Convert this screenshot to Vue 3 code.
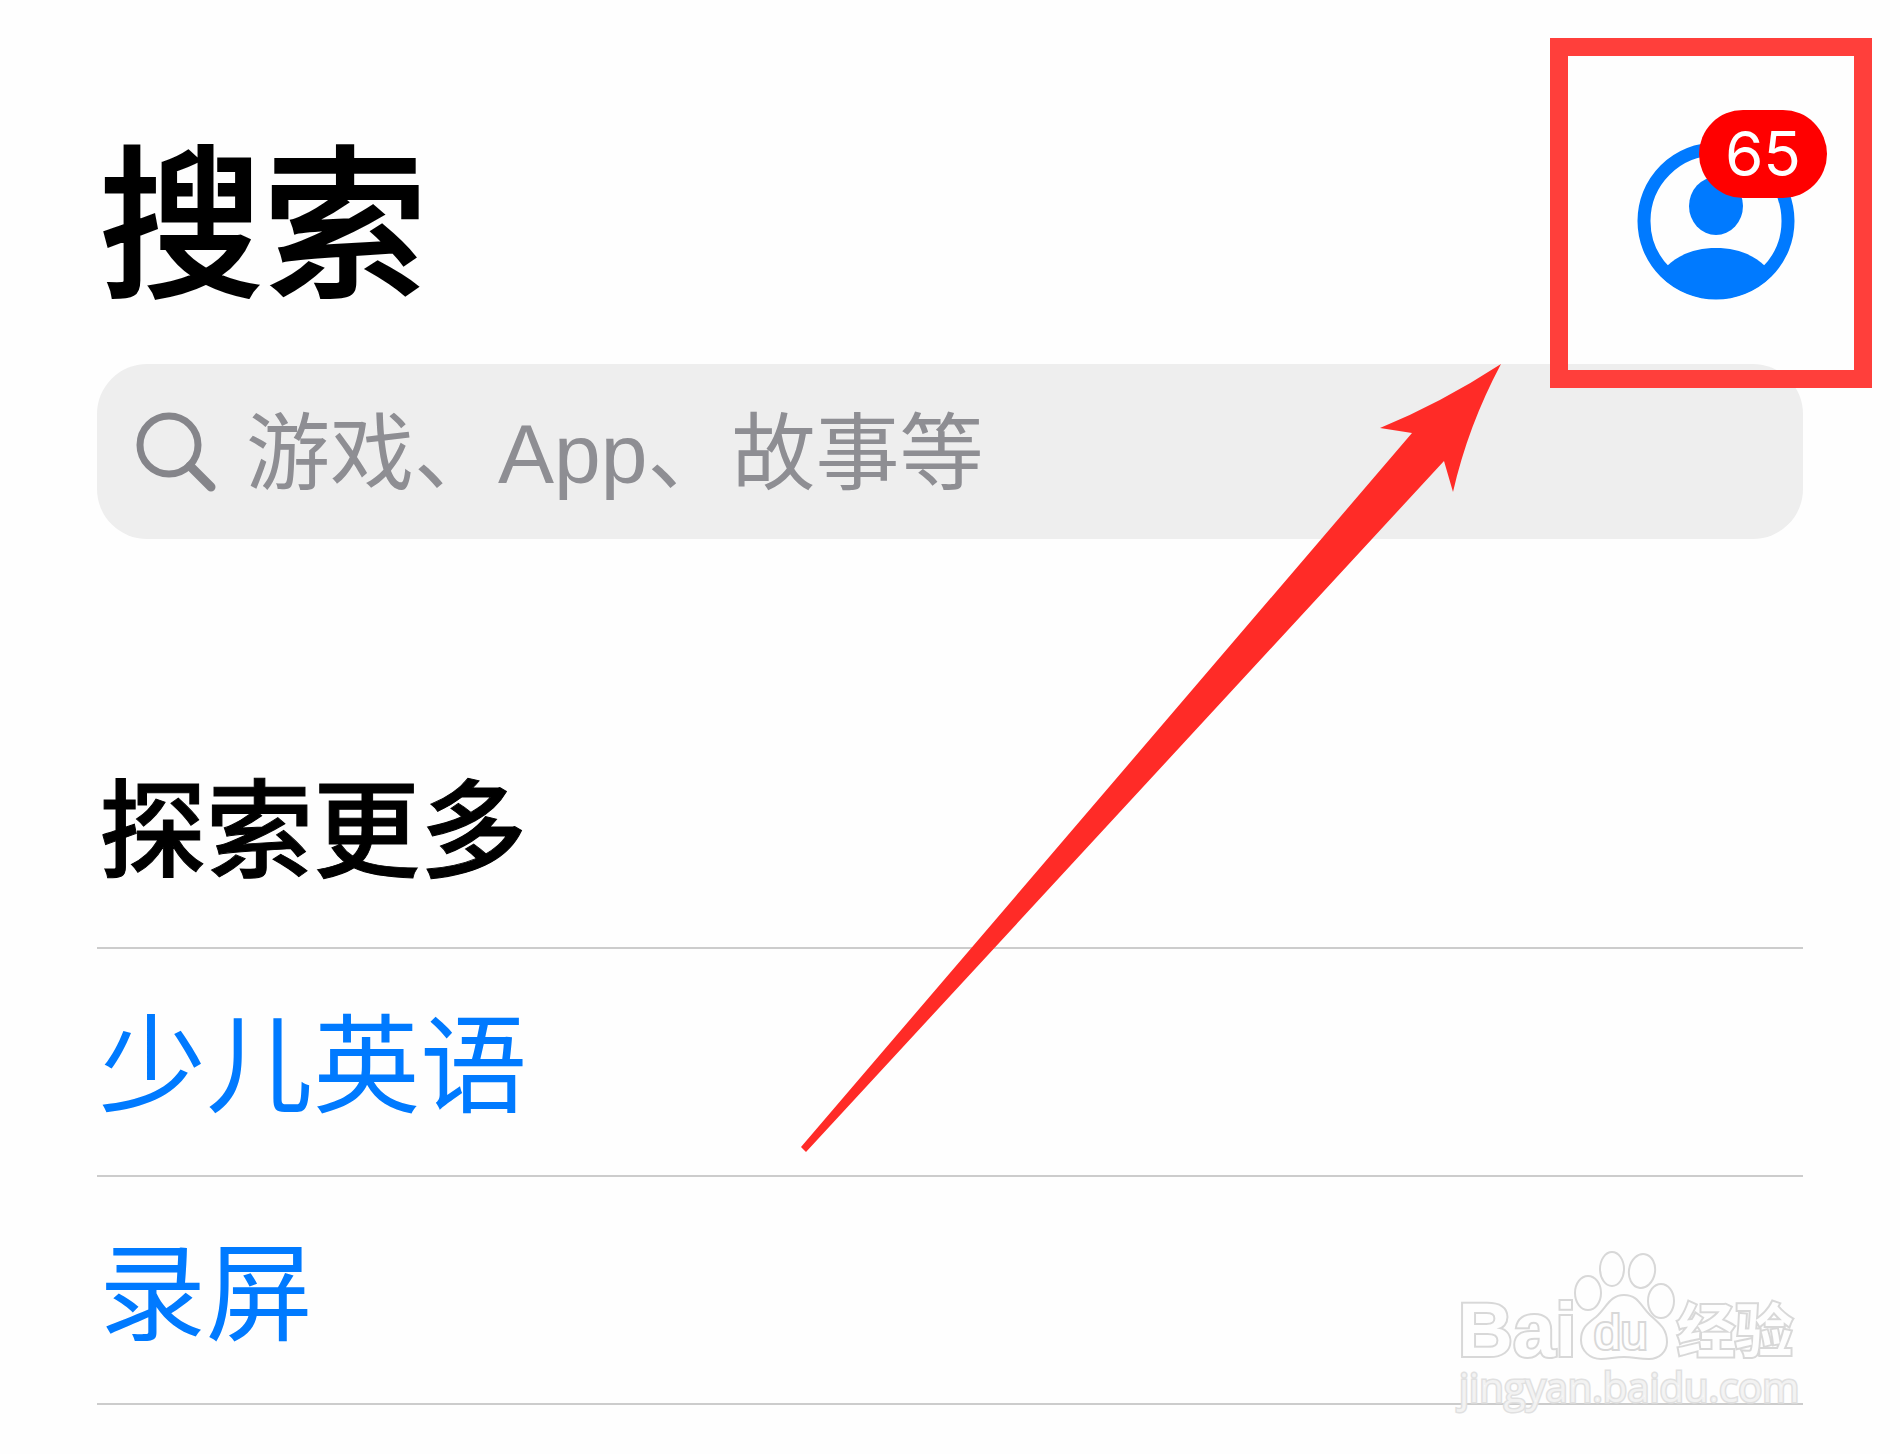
<script setup>
import { ref } from 'vue';

const query = ref('');
const unreadCount = ref(65);

const suggestions = [
  { id: 1, title: '少儿英语' },
  { id: 2, title: '录屏' }
];
</script>

<template>
  <main class="page">
    <header class="header">
      <h1 class="title">搜索</h1>

      <div class="account">
        <button class="account-button" type="button" aria-label="账户">
          <svg class="avatar" viewBox="0 0 158 158" aria-hidden="true">
            <defs>
              <clipPath id="avatar-clip">
                <circle cx="79" cy="79" r="78" />
              </clipPath>
            </defs>
            <circle cx="79" cy="79" r="72" fill="none" stroke="#007aff" stroke-width="13" />
            <ellipse cx="79" cy="64" rx="27" ry="29" fill="#007aff" />
            <path
              d="M30 124 C42 112 60 106 79 106 C98 106 116 112 128 124 L140 158 H18 Z"
              fill="#007aff"
              clip-path="url(#avatar-clip)"
            />
          </svg>
          <span class="badge">{{ unreadCount }}</span>
        </button>
        <div class="highlight"></div>
      </div>
    </header>

    <label class="search">
      <svg class="search-icon" viewBox="0 0 82 82" aria-hidden="true">
        <circle cx="34" cy="34" r="29" fill="none" stroke="#85858a" stroke-width="7" />
        <path d="M55 55 L76 76" stroke="#85858a" stroke-width="9" stroke-linecap="round" />
      </svg>
      <input
        v-model="query"
        class="search-input"
        type="text"
        aria-label="搜索"
        placeholder="游戏、App、故事等"
      />
    </label>

    <section class="discover">
      <h2 class="subtitle">探索更多</h2>
      <ul class="list">
        <li v-for="item in suggestions" :key="item.id" class="item">
          <a class="link" href="#">{{ item.title }}</a>
        </li>
      </ul>
    </section>

    <svg class="arrow" viewBox="0 0 700 788" aria-hidden="true">
      <path
        d="M700 0 Q640 39 579 64 L611 69 L0 783 L5 788 L643 97 L652 128 Q667 62 700 0 Z"
        fill="#ff2b27"
      />
    </svg>

    <svg class="watermark" viewBox="0 0 360 180" aria-hidden="true">
      <g class="mark">
        <ellipse cx="162" cy="24" rx="12" ry="17" />
        <ellipse cx="192" cy="26" rx="13" ry="17" transform="rotate(10 192 26)" />
        <ellipse cx="138" cy="48" rx="13" ry="17" />
        <ellipse cx="211" cy="56" rx="13" ry="17" />
        <path
          d="M174 50 C188 50 190 60 200 70 C210 79 217 84 217 97 C217 107 209 114 199 114 C188 114 184 112 174 112 C164 112 160 114 151 114 C140 114 131 106 131 95 C131 83 137 79 146 72 C157 62 160 50 174 50 Z"
        />
        <text class="brand" x="8" y="111">Bai</text>
        <text class="brand-small" x="144" y="104">du</text>
        <text class="brand-cn" x="227" y="107">经验</text>
        <text class="site" x="9" y="157">jingyan.baidu.com</text>
      </g>
    </svg>
  </main>
</template>

<style>
body {
  background-color: #fefefe;
}
</style>

<style scoped>
.page {
  position: relative;
  overflow: hidden;
  padding: 110px 97px 49px;
  font-family: "Liberation Sans", "Noto Sans CJK SC", sans-serif;
  color: #000;
}

.header {
  display: flex;
  justify-content: space-between;
  align-items: center;
  padding-right: 8px;
}

.title,
.subtitle {
  margin: 0;
  font-weight: 500;
}

.title {
  padding: 14px 0 0 2px;
  font-size: 164px;
  line-height: 208px;
  -webkit-text-stroke: 2px currentColor;
}

.account {
  position: relative;
  z-index: 1;
}

.account-button {
  display: block;
  position: relative;
  padding: 0;
  border: none;
  background: none;
  cursor: pointer;
}

.avatar {
  display: block;
  width: 158px;
  height: 158px;
}

.badge {
  position: absolute;
  top: -32px;
  right: -32px;
  width: 128px;
  border-radius: 44px;
  background-color: #f00;
  color: #fff;
  font-family: Inter, "Liberation Sans", sans-serif;
  font-size: 62px;
  line-height: 88px;
  text-align: center;
}

.highlight {
  position: absolute;
  inset: -104px -77px -88px -87px;
  border: 18px solid #ff3f3b;
  pointer-events: none;
}

.search {
  display: flex;
  align-items: center;
  gap: 29px;
  height: 175px;
  margin-top: 32px;
  padding: 0 38px;
  border-radius: 50px;
  background-color: #eee;
}

.search-icon {
  flex: none;
  width: 82px;
  height: 82px;
}

.search-input {
  flex: 1;
  min-width: 0;
  padding: 4px 0 0;
  border: none;
  outline: none;
  background: none;
  color: #000;
  font-family: inherit;
  font-size: 84px;
  line-height: 120px;
}

.search-input::placeholder {
  color: #8e8e93;
  opacity: 1;
}

.discover {
  margin-top: 208px;
}

.subtitle {
  padding: 10px 0 40px 2px;
  border-bottom: 2px solid #ccc;
  font-size: 107px;
  line-height: 150px;
  -webkit-text-stroke: 1px currentColor;
}

.list {
  margin: 0;
  padding: 0;
  list-style: none;
}

.item {
  border-bottom: 2px solid #ccc;
}

.link {
  display: block;
  padding: 10px 0 0 2px;
  color: #007aff;
  font-size: 107px;
  line-height: 216px;
  text-decoration: none;
}

.arrow {
  position: absolute;
  top: 364px;
  right: 399px;
  width: 700px;
  height: 788px;
  pointer-events: none;
}

.watermark {
  position: absolute;
  right: 90px;
  bottom: 29px;
  width: 360px;
  height: 180px;
  pointer-events: none;
}

.mark {
  fill: #fefefe;
  stroke: #d8d8d8;
  stroke-width: 2px;
}

.brand,
.brand-small,
.brand-cn {
  stroke-width: 4px;
  paint-order: stroke;
}

.brand {
  font-size: 76px;
  font-weight: bold;
}

.brand-small {
  font-size: 48px;
}

.brand-cn {
  font-size: 58px;
  font-weight: bold;
}

.site {
  fill: rgba(255, 255, 255, 0.6);
  stroke: #e0e0e0;
  stroke-width: 3px;
  font-family: "Open Sans", sans-serif;
  font-size: 40px;
  paint-order: stroke;
}
</style>
